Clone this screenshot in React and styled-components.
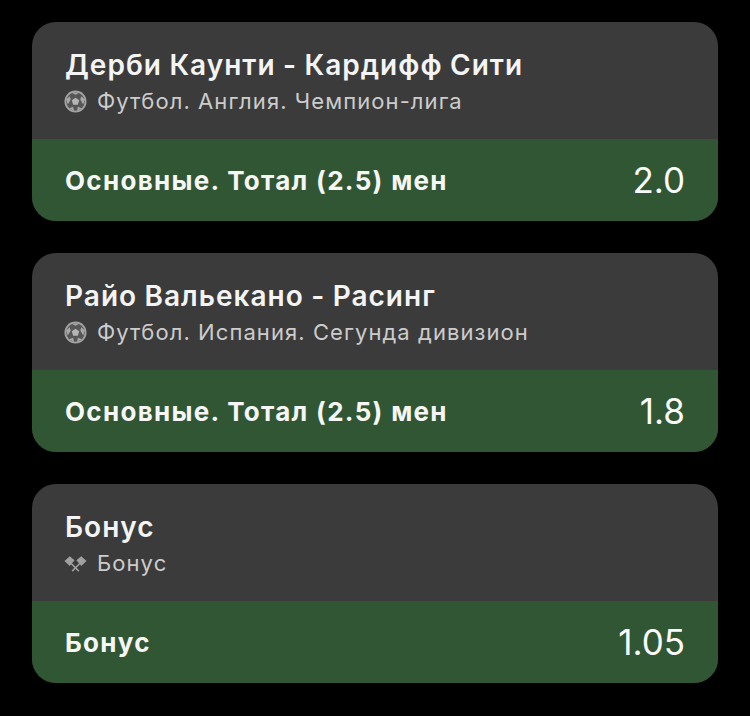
import React from "react";
import styled, { createGlobalStyle } from "styled-components";

const Global = createGlobalStyle`
  html, body { margin: 0; padding: 0; background: #000; }
  body { font-family: Inter, "Noto Sans", "Liberation Sans", sans-serif; }
`;

const Page = styled.div`
  width: 750px;
  height: 716px;
  box-sizing: border-box;
  padding: 22px 32px 0;
  display: flex;
  flex-direction: column;
  gap: 32px;
  background: #000;
`;

const Card = styled.section`
  height: 199px;
  border-radius: 24px;
  overflow: hidden;
  display: flex;
  flex-direction: column;
  background: #3b3b3b;
`;

const Head = styled.div`
  height: 117px;
  box-sizing: border-box;
  padding: 26px 32px 0 33px;
`;

const Title = styled.div`
  font-size: 28px;
  line-height: 34px;
  font-weight: 600;
  letter-spacing: 1px;
  word-spacing: -0.6px;
  color: #f4f4f4;
`;

const Sub = styled.div`
  display: flex;
  align-items: center;
  gap: 10px;
  margin-top: 5px;
  font-size: 22px;
  line-height: 28px;
  letter-spacing: 1.07px;
  color: #cccccc;
`;

const IconSlot = styled.span`
  display: flex;
  margin-left: -1px;
`;

const Bar = styled.div`
  flex: 1;
  display: flex;
  align-items: center;
  justify-content: space-between;
  padding: 0 33px;
  background: #305633;
`;

const Market = styled.div`
  font-size: 26px;
  font-weight: 700;
  letter-spacing: 1.3px;
  color: #f6f6f6;
`;

const Odd = styled.div`
  font-size: 35px;
  font-weight: 400;
  color: #fafafa;
`;

const Ball = () => (
  <svg width="23" height="23" viewBox="0 0 24 24">
    <circle cx="12" cy="12" r="11.5" fill="#a2a2a2" />
    <circle cx="12" cy="12" r="9.6" fill="#565656" />
    <path d="M12 8l3.9 2.8-1.5 4.6H9.6L8.1 10.8z" fill="#b4b4b4" />
    <path d="M7.5 2.5L12 5l4.5-2.5zM2.2 10l3.8-3.5 1 3.5-3 5zM21.8 10L18 6.5 17 10l3 5zM5.5 19l4-1.5 1 4.5zM18.5 19l-4-1.5-1 4.5z" fill="#a8a8a8" />
  </svg>
);

const Flags = () => (
  <svg width="23" height="23" viewBox="0 0 24 24" fill="#a0a0a0">
    <path d="M0.5 9.5L6 4.5l5 4-5 6z" />
    <path d="M23.5 9.5L18 4.5l-5 4 5 6z" />
    <path d="M7.5 12l8 8M16.5 12l-8 8" stroke="#a0a0a0" strokeWidth="1.6" />
  </svg>
);

const rows = [
  { title: "Дерби Каунти - Кардифф Сити", sub: "Футбол. Англия. Чемпион-лига", market: "Основные. Тотал (2.5) мен", odd: "2.0", icon: <Ball /> },
  { title: "Райо Вальекано - Расинг", sub: "Футбол. Испания. Сегунда дивизион", market: "Основные. Тотал (2.5) мен", odd: "1.8", icon: <Ball /> },
  { title: "Бонус", sub: "Бонус", market: "Бонус", odd: "1.05", icon: <Flags /> },
];

export default function App() {
  return (
    <Page>
      <Global />
      {rows.map((r) => (
        <Card key={r.title}>
          <Head>
            <Title>{r.title}</Title>
            <Sub><IconSlot>{r.icon}</IconSlot>{r.sub}</Sub>
          </Head>
          <Bar>
            <Market>{r.market}</Market>
            <Odd>{r.odd}</Odd>
          </Bar>
        </Card>
      ))}
    </Page>
  );
}
